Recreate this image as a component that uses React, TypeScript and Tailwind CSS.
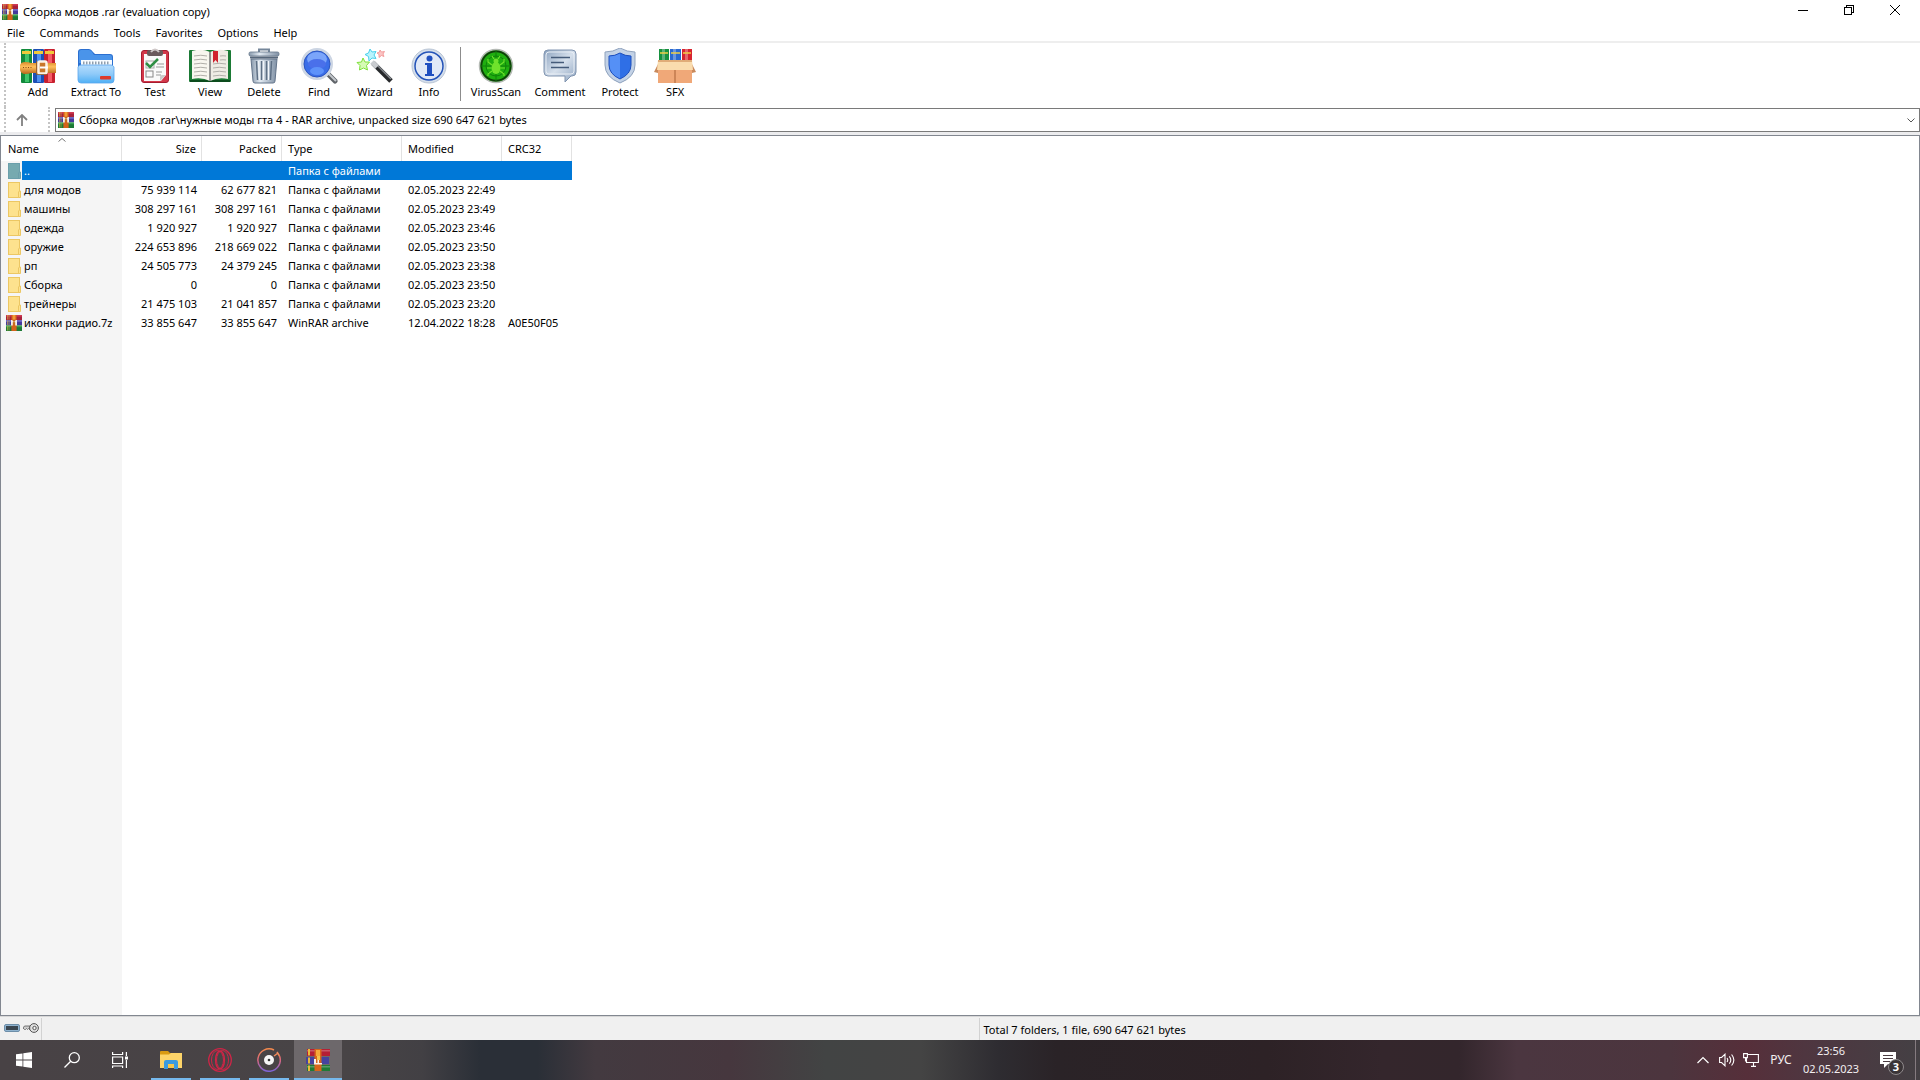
import { ReactNode } from 'react'

type Row = {
  name: string
  size: string
  packed: string
  type: string
  modified: string
  crc: string
  archive?: boolean
}

const folder = 'Папка с файлами'

const rows: Row[] = [
  { name: 'для модов', size: '75 939 114', packed: '62 677 821', type: folder, modified: '02.05.2023 22:49', crc: '' },
  { name: 'машины', size: '308 297 161', packed: '308 297 161', type: folder, modified: '02.05.2023 23:49', crc: '' },
  { name: 'одежда', size: '1 920 927', packed: '1 920 927', type: folder, modified: '02.05.2023 23:46', crc: '' },
  { name: 'оружие', size: '224 653 896', packed: '218 669 022', type: folder, modified: '02.05.2023 23:50', crc: '' },
  { name: 'рп', size: '24 505 773', packed: '24 379 245', type: folder, modified: '02.05.2023 23:38', crc: '' },
  { name: 'Сборка', size: '0', packed: '0', type: folder, modified: '02.05.2023 23:50', crc: '' },
  { name: 'трейнеры', size: '21 475 103', packed: '21 041 857', type: folder, modified: '02.05.2023 23:20', crc: '' },
  { name: 'иконки радио.7z', size: '33 855 647', packed: '33 855 647', type: 'WinRAR archive', modified: '12.04.2022 18:28', crc: 'A0E50F05', archive: true },
]

const menu = ['File', 'Commands', 'Tools', 'Favorites', 'Options', 'Help']

// small stacked-books logo
function RarIcon({ className = 'size-4' }: { className?: string }) {
  return (
    <svg viewBox="0 0 16 16" className={className} aria-hidden="true">
      <rect x="0" y="0" width="16" height="5" fill="#a8203a" />
      <rect x="0" y="0" width="16" height="1.6" fill="#cf3a55" />
      <rect x="0" y="5.3" width="16" height="5" fill="#44389c" />
      <rect x="0" y="5.3" width="16" height="1.6" fill="#6a63c4" />
      <rect x="0" y="10.6" width="16" height="5.4" fill="#1c7a35" />
      <rect x="0" y="10.6" width="16" height="1.6" fill="#3ba352" />
      <path d="M1.5 0v4.6M3 0v4.6M1.5 5.6v4.4M3 5.6v4.4M1.5 11v4.6M3 11v4.6" stroke="#d9b545" strokeWidth=".6" />
      <rect x="5.4" y="0" width="5.2" height="16" fill="#d4621b" />
      <rect x="6.6" y="0" width="2.8" height="4.6" fill="#f29a35" />
      <path d="M5 5v5.6h1.8V7.2h2.4v3.4H11V5H9.4v1H6.6V5z" fill="#f4efe6" />
      <rect x="7.4" y="5.4" width="1.2" height="4.4" fill="#b9761f" />
    </svg>
  )
}

function FolderIcon({ selected }: { selected?: boolean }) {
  const main = selected ? '#76aab0' : '#fde28e'
  const edge = selected ? '#6b9fab' : '#ecc763'
  return (
    <svg viewBox="0 0 16 16" className="size-4 shrink-0" aria-hidden="true">
      <rect x="2.5" y=".5" width="11" height="15" fill={main} stroke={edge} />
      <path d="M12.5 15.500V10l1-1H14.500v6.500z" fill={main} stroke={edge} />
    </svg>
  )
}

function AddIcon() {
  const books = [
    { x: 1, a: '#128a3c', b: '#3fc46a' },
    { x: 13, a: '#1c4fb5', b: '#4b90ee' },
    { x: 24, a: '#c8202f', b: '#f55b66' },
  ]
  return (
    <svg viewBox="0 0 36 36" className="size-9" aria-hidden="true">
      <defs>
        <linearGradient id="strap" x2="0" y2="1">
          <stop offset="0" stopColor="#d98a2a" />
          <stop offset=".4" stopColor="#ffc05c" />
          <stop offset="1" stopColor="#b8651a" />
        </linearGradient>
      </defs>
      {books.map(b => (
        <g key={b.x}>
          <rect x={b.x} y="1" width="11" height="34" rx="1" fill={b.a} />
          <rect x={b.x + 4} y="2" width="4" height="32" fill={b.b} />
          <rect x={b.x + 1} y="3" width="9" height="3" fill="#efc93a" />
        </g>
      ))}
      <path d="M0 17q1-3 5-3 4 0 6 1h25v10H11q-2 1-6 1-4 0-5-4z" fill="url(#strap)" />
      <path d="M3 19.500h9" stroke="#8a4a10" strokeDasharray="1 1.500" />
      <path d="M16 14h10v12H16z" fill="#c9772a" />
      <rect x="18.500" y="13.500" width="8" height="12" rx="1.500" fill="none" stroke="#fbf3e6" strokeWidth="2.500" />
      <path d="M20 19.500h8" stroke="#fff" strokeWidth="2" />
      <path d="M16.500 12.500v14h11" fill="none" stroke="#8b5a2a" strokeWidth=".8" />
    </svg>
  )
}

function ExtractIcon() {
  return (
    <svg viewBox="0 0 38 36" className="h-9 w-[38px]" aria-hidden="true">
      <defs>
        <linearGradient id="fold" x2="0" y2="1">
          <stop offset="0" stopColor="#b4dcfd" />
          <stop offset=".5" stopColor="#8fcaf9" />
          <stop offset="1" stopColor="#4fb0f5" />
        </linearGradient>
      </defs>
      <path d="M1 4q0-3 3-3h8q2 0 4 3l2 2h15q3 0 3 3v20H1z" fill="#2b6fd0" />
      <path d="M2 4q0-2 2-2h8q2 0 3 2l2 3h16q2 0 2 2v6H2z" fill="#4a94ea" />
      <rect x="4" y="12" width="31" height="11" fill="#f7fbff" />
      <path d="M6 15h27" stroke="#8f9dac" strokeWidth="3" strokeDasharray="1.500 1.500" />
      <path d="M1 19q1-2 3-2h30q2 0 3 2v13q0 3-3 3H4q-3 0-3-3z" fill="url(#fold)" stroke="#5ba6ee" strokeWidth=".8" />
      <rect x="23" y="28" width="11" height="3.500" rx="1" fill="#dd3b2c" />
    </svg>
  )
}

function TestIcon() {
  return (
    <svg viewBox="0 0 32 36" className="h-9 w-8" aria-hidden="true">
      <rect x="2.500" y="2.500" width="27" height="32" rx="2.500" fill="#d3384a" stroke="#a51c30" />
      <path d="M5 6h22v21l-5 6H5z" fill="#fafafa" />
      <path d="M27 27l-6 6v-4q0-2 2-2z" fill="#c9c9c9" />
      <rect x="8" y="2" width="16" height="6" rx="2" fill="#6a5a5c" />
      <path d="M12 4q4-5 8 0" stroke="#cfc8c8" strokeWidth="2" fill="none" />
      <rect x="7" y="13" width="8" height="7" fill="none" stroke="#aaa" />
      <path d="M7 15l4 4 8-8" fill="none" stroke="#2f8f45" strokeWidth="2.500" />
      <rect x="7" y="23" width="7" height="6" fill="none" stroke="#888" />
      <path d="M18 16h7M17 19h8M17 24h6M17 27h5" stroke="#999" />
    </svg>
  )
}

function ViewIcon() {
  return (
    <svg viewBox="0 0 44 36" className="h-9 w-11" aria-hidden="true">
      <rect x="1" y="2" width="42" height="32" rx="1" fill="#1b7a35" />
      <rect x="2" y="32" width="40" height="2" fill="#0c4b1c" />
      <path d="M4 3q10-3 18 1v29q-8-4-18-2z" fill="#f8f6ef" />
      <path d="M40 3q-10-3-18 1v29q8-4 18-2z" fill="#efece4" />
      <path d="M22 4v29" stroke="#777" strokeWidth="1.500" />
      <path d="M6 8q7-1.500 13 0M6 12q7-1.500 13 0M6 16q7-1.500 13 0M6 20q7-1.500 13 0M6 24q7-1.500 13 0M6 28q7-1.500 13 0M25 16q6-1.500 13 0M25 20q6-1.500 13 0M25 24q6-1.500 13 0M25 28q6-1.500 13 0M32 8q3-.5 6 0M32 12q3-.5 6 0" fill="none" stroke="#b0aea8" />
      <path d="M25 3h5v12l-2.500-3L25 15z" fill="#d0222e" />
    </svg>
  )
}

function DeleteIcon() {
  return (
    <svg viewBox="0 0 32 36" className="h-9 w-8" aria-hidden="true">
      <defs>
        <linearGradient id="bin">
          <stop offset="0" stopColor="#8798ab" />
          <stop offset=".35" stopColor="#e2eaf2" />
          <stop offset="1" stopColor="#7f90a4" />
        </linearGradient>
      </defs>
      <path d="M11 4V1.500h10V4" fill="none" stroke="#75869a" strokeWidth="2" />
      <path d="M3 11h26l-2 22q0 2-2 2H7q-2 0-2-2z" fill="url(#bin)" stroke="#63748a" />
      <rect x="1" y="4" width="30" height="4" rx="1.500" fill="url(#bin)" stroke="#66778b" strokeWidth=".8" />
      <path d="M2 9.500h28" stroke="#56677b" strokeWidth="2" />
      <path d="M8.500 13l1 19M13.500 13v19M18.500 13v19M23.500 13l-1 19" stroke="#5d6f84" strokeWidth="1.500" />
      <path d="M10.500 13l1 19M15.500 13v19M20.500 13v19" stroke="#f2f6fa" />
    </svg>
  )
}

function FindIcon() {
  return (
    <svg viewBox="0 0 38 36" className="h-9 w-[38px]" aria-hidden="true">
      <path d="M26 24l9 9" stroke="#5f6368" strokeWidth="5" strokeLinecap="round" />
      <path d="M27 24l9 9" stroke="#c3c7cc" strokeWidth="2" />
      <circle cx="17" cy="16" r="14.500" fill="#3b6ee8" stroke="#ccd5e3" strokeWidth="3" />
      <circle cx="17" cy="16" r="13" fill="none" stroke="#2a55c0" />
      <ellipse cx="17" cy="11" rx="10" ry="7" fill="#7ba5fa" />
      <ellipse cx="17" cy="16" rx="9" ry="5" fill="#4a70ea" />
      <ellipse cx="17" cy="23" rx="7" ry="4" fill="#5d92fa" />
    </svg>
  )
}

function WizardIcon() {
  return (
    <svg viewBox="0 0 38 36" className="h-9 w-[38px]" aria-hidden="true">
      <path d="M17 15l18 18" stroke="#26282b" strokeWidth="5" />
      <path d="M18 14l17 17" stroke="#85898f" strokeWidth="1.500" />
      <path d="M16 14l5 5" stroke="#c9ccd0" strokeWidth="5" />
      <path d="M14 1l2 3 4-.5-2 3.500 2 3.500-4-.5-3 3-.5-4.500-3.500-2 3.500-1.500z" fill="#b9f3fc" stroke="#4bd0ec" />
      <path d="M7 10l2 4 4.500 0-3 3.500 1 4.500-4-2-4 2 .5-4.500-3-3 4.500-.5z" fill="#d5fbb5" stroke="#7ee03b" />
      <path d="M24 2l1.500 2 3-.5-1.500 2.500 1 2.500-2.500-1-2.500 2v-3l-2-1.500 2.500-1z" fill="#fbc4c4" stroke="#f08e8e" strokeWidth=".8" />
    </svg>
  )
}

function InfoIcon() {
  return (
    <svg viewBox="0 0 36 36" className="size-9" aria-hidden="true">
      <circle cx="18" cy="18" r="17" fill="#d5dfec" stroke="#b8c4d4" />
      <circle cx="18" cy="18" r="14" fill="#e1e9f7" stroke="#2453b8" strokeWidth="1.500" />
      <circle cx="18.500" cy="10.500" r="3" fill="#1f4fc0" />
      <path d="M14 15h7v11h2v2h-9v-2h2v-9h-2z" fill="#1f4fc0" />
    </svg>
  )
}

function VirusIcon() {
  return (
    <svg viewBox="0 0 36 36" className="size-9" aria-hidden="true">
      <circle cx="18" cy="18" r="16.500" fill="#1b6b12" stroke="#b5bab5" strokeWidth="1.500" />
      <circle cx="18" cy="18" r="14.500" fill="#1fae10" stroke="#0e3d0a" strokeWidth="1.500" />
      <circle cx="18" cy="18" r="10" fill="none" stroke="#0f8209" />
      <path d="M18 3v30M3 18h30" stroke="#0f8209" />
      <ellipse cx="18" cy="20" rx="4.500" ry="6" fill="#6fe22c" />
      <circle cx="18" cy="13" r="2.500" fill="#6fe22c" />
      <path d="M14 17l-4-3V11M22 17l4-3V11M13.500 20H9M22.500 20H27M14 23l-4 3v2M22 23l4 3v2M16 11l-2-3M20 11l2-3" fill="none" stroke="#6fe22c" strokeWidth="1.200" />
    </svg>
  )
}

function CommentIcon() {
  return (
    <svg viewBox="0 0 34 36" className="h-9 w-[34px]" aria-hidden="true">
      <defs>
        <linearGradient id="bubble" x2="1" y2="1">
          <stop offset="0" stopColor="#8ba2bf" />
          <stop offset=".5" stopColor="#d6e0ec" />
          <stop offset="1" stopColor="#8fa5c1" />
        </linearGradient>
      </defs>
      <path d="M5 2h24q4 0 4 4v18q0 4-4 4h-1l-6 6v-6H5q-4 0-4-4V6q0-4 4-4z" fill="url(#bubble)" stroke="#8195b0" />
      <path d="M6 4h22q3 0 3 3v16q0 3-3 3H6q-3 0-3-3V7q0-3 3-3z" fill="none" stroke="#e8eef5" />
      <path d="M8 9.500h19M8 14.500h13M8 19.500h18" stroke="#455b7a" strokeWidth="1.500" />
    </svg>
  )
}

function ProtectIcon() {
  return (
    <svg viewBox="0 0 32 36" className="h-9 w-8" aria-hidden="true">
      <path d="M16 0q7 4 15 4v13q0 12-15 18Q1 29 1 17V4q8 0 15-4z" fill="#c3d2e6" stroke="#8fa2bd" />
      <path d="M16 5q5 3 11 3v9q0 9-11 14Q5 26 5 17V8q6 0 11-3z" fill="#2f6fe6" />
      <path d="M16 5v26Q5 26 5 17V8q6 0 11-3z" fill="#5590f6" />
      <path d="M16 5q5 3 11 3v9q0 9-11 14Q5 26 5 17V8q6 0 11-3z" fill="none" stroke="#1d4ebc" />
    </svg>
  )
}

function SfxIcon() {
  return (
    <svg viewBox="0 0 44 36" className="h-9 w-11" aria-hidden="true">
      <path d="M6 1h10v14H6z" fill="#17913f" />
      <path d="M17 1h11v14H17z" fill="#2a6ad2" />
      <path d="M29 1h10v14H29z" fill="#d8242f" />
      <path d="M9 1h3v14H9zM20 1h3v14h-3zM32 1h3v14h-3z" fill="#fff" opacity=".3" />
      <path d="M7 5h8M18 5h9M30 5h8" stroke="#f0cf45" strokeWidth="1.500" />
      <path d="M6 14L1 24l4 1V18zM38 14l5 10-4 1z" fill="#c98a5c" />
      <path d="M5 18h34v17H5z" fill="#f0a878" />
      <path d="M5 12h34l1 10H4z" fill="#fadcae" />
      <path d="M5 12h34v2H5z" fill="#e0ac78" />
      <path d="M22 22v13" stroke="#c27a4c" strokeWidth="1.500" />
    </svg>
  )
}

const tools: { label: string; width: string; icon: ReactNode }[] = [
  { label: 'Add', width: 'w-[54px]', icon: <AddIcon /> },
  { label: 'Extract To', width: 'w-[62px]', icon: <ExtractIcon /> },
  { label: 'Test', width: 'w-14', icon: <TestIcon /> },
  { label: 'View', width: 'w-[54px]', icon: <ViewIcon /> },
  { label: 'Delete', width: 'w-[54px]', icon: <DeleteIcon /> },
  { label: 'Find', width: 'w-14', icon: <FindIcon /> },
  { label: 'Wizard', width: 'w-14', icon: <WizardIcon /> },
  { label: 'Info', width: 'w-[52px]', icon: <InfoIcon /> },
]

const extraTools: typeof tools = [
  { label: 'VirusScan', width: 'w-[62px]', icon: <VirusIcon /> },
  { label: 'Comment', width: 'w-[66px]', icon: <CommentIcon /> },
  { label: 'Protect', width: 'w-[54px]', icon: <ProtectIcon /> },
  { label: 'SFX', width: 'w-14', icon: <SfxIcon /> },
]

function ToolButton({ tool }: { tool: (typeof tools)[number] }) {
  return (
    <button type="button" className={`flex flex-col items-center justify-start whitespace-nowrap ${tool.width}`}>
      {tool.icon}
      <span className="leading-4">{tool.label}</span>
    </button>
  )
}

function TitleBar() {
  return (
    <header className="flex h-6 items-start pr-0.5">
      <h1 className="flex grow items-center gap-[5px] pt-[3px] pl-0.5 leading-4">
        <RarIcon />
        <span className="pt-px">Сборка модов .rar (evaluation copy)</span>
      </h1>
      <button type="button" aria-label="Minimize" className="flex h-5 w-[46px] items-center justify-center">
        <svg viewBox="0 0 10 10" className="size-2.5" shapeRendering="crispEdges"><path d="M0 5.500h10" stroke="#000" /></svg>
      </button>
      <button type="button" aria-label="Restore" className="flex h-5 w-[46px] items-center justify-center">
        <svg viewBox="0 0 10 10" className="size-2.5" fill="none" stroke="#000" shapeRendering="crispEdges">
          <path d="M.5 2.500h7v7h-7zM2.500 2.500v-2h7v7h-2" />
        </svg>
      </button>
      <button type="button" aria-label="Close" className="flex h-5 w-[46px] items-center justify-center">
        <svg viewBox="0 0 10 10" className="size-2.5"><path d="M0 0l10 10M10 0L0 10" stroke="#000" /></svg>
      </button>
    </header>
  )
}

function FileTable() {
  const edge = 'border-r border-[#e2e2e2] font-normal'
  return (
    <table className="w-[571px] table-fixed border-separate border-spacing-0 whitespace-nowrap">
      <colgroup>
        <col className="w-[121px]" />
        <col className="w-20" />
        <col className="w-20" />
        <col className="w-[120px]" />
        <col className="w-[100px]" />
        <col className="w-[70px]" />
      </colgroup>
      <thead>
        <tr className="h-[25px] bg-white text-left">
          <th className={`relative pt-0.5 pl-[7px] ${edge}`}>
            Name
            <svg viewBox="0 0 8 4" className="absolute top-0.5 left-[57px] h-1 w-2" fill="none" stroke="#777"><path d="M.5 3.500L4 .5l3.500 3" /></svg>
          </th>
          <th className={`pt-0.5 pr-[5px] text-right ${edge}`}>Size</th>
          <th className={`pt-0.5 pr-[5px] text-right ${edge}`}>Packed</th>
          <th className={`pt-0.5 pl-1.5 ${edge}`}>Type</th>
          <th className={`pt-0.5 pl-1.5 ${edge}`}>Modified</th>
          <th className={`pt-0.5 pl-1.5 ${edge}`}>CRC32</th>
        </tr>
      </thead>
      <tbody className="leading-[19px]">
        <tr className="h-[19px] bg-[linear-gradient(to_right,#f5f5f5_21px,#0078d7_21px)] text-white">
          <td className="p-0 pl-[5px]"><div className="flex items-center gap-0.5"><FolderIcon selected />..</div></td>
          <td />
          <td />
          <td className="p-0 pl-1.5">{folder}</td>
          <td />
          <td />
        </tr>
        {rows.map(row => (
          <tr key={row.name} className="h-[19px]">
            <td className="p-0 pl-[5px]">
              <div className="flex items-center gap-0.5">
                {row.archive ? <RarIcon className="size-4 shrink-0" /> : <FolderIcon />}
                {row.name}
              </div>
            </td>
            <td className="p-0 pr-[5px] text-right">{row.size}</td>
            <td className="p-0 pr-[5px] text-right">{row.packed}</td>
            <td className="p-0 pl-1.5">{row.type}</td>
            <td className="p-0 pl-1.5">{row.modified}</td>
            <td className="p-0 pl-1.5">{row.crc}</td>
          </tr>
        ))}
      </tbody>
    </table>
  )
}

function TaskApp({ label, active, children }: { label: string; active?: boolean; children: ReactNode }) {
  return (
    <button type="button" aria-label={label} className={`flex h-10 w-12 flex-col items-center ${active ? 'bg-[#6d686b]' : ''}`}>
      <span className="flex grow items-center pt-0.5">{children}</span>
      <span className={`h-0.5 bg-[#76b9ed] ${active ? 'w-full' : 'w-10'}`} />
    </button>
  )
}

function Taskbar() {
  return (
    <footer className="flex h-10 items-center bg-[linear-gradient(to_right,#484245_0%,#484446_18%,#424044_22%,#2a2f37_25%,#2a2f37_28%,#433a40_31%,#46373e_38%,#424444_43%,#444444_48%,#2e2c31_52%,#2a2327_55%,#2d2226_66%,#34262c_72%,#33262c_76%,#4b3640_79%,#4c353e_87%,#562f3a_91%,#4f3640_94%,#444044_100%)] text-[#f2eef0]">
      <button type="button" aria-label="Start" className="flex h-10 w-12 items-center justify-center">
        <svg viewBox="0 0 16 16" className="size-4" fill="#fff"><path d="M0 2.300L6.500 1.400V7.600H0zM7.300 1.300L16 0v7.600H7.300zM0 8.400h6.500v6.200L0 13.700zM7.300 8.400H16V16l-8.700-1.300z" /></svg>
      </button>
      <button type="button" aria-label="Search" className="flex h-10 w-12 items-center justify-center">
        <svg viewBox="0 0 16 16" className="size-4" fill="none" stroke="#fff" strokeWidth="1.300"><circle cx="10.300" cy="5.700" r="5" /><path d="M6.700 9.300L.5 15.500" /></svg>
      </button>
      <button type="button" aria-label="Task View" className="mr-[3px] flex h-10 w-12 items-center justify-center">
        <svg viewBox="0 0 16 16" className="size-4" fill="none" stroke="#fff" strokeWidth="1.200">
          <path d="M.6 0v2.500h10V0M.6 5h10v6.500H.6zM.6 16v-2h10v2M14.400 0v4M14.400 8v8" />
          <path d="M13 4.500h3v3h-3z" fill="#fff" stroke="none" />
        </svg>
      </button>
      <div className="flex gap-px">
        <TaskApp label="File Explorer">
          <svg viewBox="0 0 22 20" className="h-5 w-[22px]">
            <path d="M0 2q0-1 1-1h7l2 2h12v6H0z" fill="#d99a12" />
            <path d="M0 4.500h9l2-1.500h11v15H0z" fill="#fdd469" />
            <path d="M4 19v-7q0-2 2-2h10q2 0 2 2v7h-4v-5H8v5z" fill="#3b9be0" />
            <path d="M8 14h6v4H8z" fill="#f7c64b" />
          </svg>
        </TaskApp>
        <TaskApp label="Opera">
          <svg viewBox="0 0 24 24" className="size-6" fill="none" stroke="#cf2547" strokeWidth="1.300">
            <circle cx="12" cy="12" r="11.300" />
            <ellipse cx="9.500" cy="12" rx="6" ry="9.500" strokeWidth="1" />
            <ellipse cx="14.500" cy="12" rx="6" ry="9.500" strokeWidth="1" />
            <ellipse cx="12" cy="12" rx="4.500" ry="9" />
          </svg>
        </TaskApp>
        <TaskApp label="Music">
          <svg viewBox="0 0 24 24" className="size-6" fill="none">
            <defs>
              <linearGradient id="ring" x2="0" y2="1">
                <stop offset="0" stopColor="#f58a4c" />
                <stop offset=".5" stopColor="#d9677e" />
                <stop offset="1" stopColor="#7c63d6" />
              </linearGradient>
            </defs>
            <path d="M17 2A11.200 11.200 0 1 0 22.500 8" stroke="url(#ring)" strokeWidth="1.500" />
            <path d="M17 8l4-3M20 4l2.500 4" stroke="#f08a5c" strokeWidth="1.500" />
            <circle cx="12" cy="12" r="5" fill="#f5f5f5" />
            <circle cx="12" cy="12" r="1.300" fill="#333" />
          </svg>
        </TaskApp>
        <TaskApp label="WinRAR" active>
          <svg viewBox="0 0 24 24" className="size-6">
            <path d="M1 1h23v7H1z" fill="#b51f35" />
            <path d="M0 9h23v7H0z" fill="#45429f" />
            <path d="M1 17h23v6H1z" fill="#1f7a36" />
            <path d="M1 2h23v1.500H1zM1 18h23v1.500H1z" fill="#fff" opacity=".25" />
            <path d="M3 1v6.500M3 9.500v6M3 17.500V23" stroke="#e9b93a" strokeWidth="2" />
            <path d="M8.500 1h7v22h-7z" fill="#d8651c" />
            <path d="M10 2h4v6h-4z" fill="#f6a93a" />
            <path d="M8 11v5.500h8V15h-3v-4h-1.500v4H10v-4z" fill="#f7f1e8" />
            <path d="M11 8h3v4h-3z" fill="#f3c24f" />
          </svg>
        </TaskApp>
      </div>
      <div className="ml-auto flex h-full items-center">
        <button type="button" aria-label="Show hidden icons" className="flex w-6 justify-center">
          <svg viewBox="0 0 12 8" className="h-2 w-3" fill="none" stroke="#fff" strokeWidth="1.200"><path d="M.5 7L6 1.500 11.500 7" /></svg>
        </button>
        <button type="button" aria-label="Volume" className="flex w-6 justify-center">
          <svg viewBox="0 0 16 14" className="h-3.5 w-4" fill="none" stroke="#fff" strokeWidth="1.100">
            <path d="M.6 4.500h2L6 1.200v11.600L2.600 9.500h-2zM8 5q1.500 2 0 4M10.300 3.300q3 3.700 0 7.400M12.600 1.500q4.500 5.500 0 11" />
          </svg>
        </button>
        <button type="button" aria-label="Network" className="flex w-6 justify-center">
          <svg viewBox="0 0 16 14" className="h-3.5 w-4" fill="none" stroke="#fff" strokeWidth="1.100">
            <path d="M5 1.500h10.400v8H3.500V5M8 13.400h5M10.500 9.500v4M.6.6h3.800v4H.6zM2.500 4.600v4" />
          </svg>
        </button>
        <button type="button" className="w-9 text-center text-xs">РУС</button>
        <button type="button" className="mr-1 flex w-16 flex-col items-center leading-[18px]">
          <span>23:56</span>
          <span>02.05.2023</span>
        </button>
        <button type="button" aria-label="Notifications" className="relative flex h-10 w-12 items-center justify-start pl-[13px]">
          <svg viewBox="0 0 16 16" className="size-4"><path d="M0 0h16v12H8l-4 4v-4H0z" fill="#fff" /><path d="M3 3.500h10M3 6.500h10M3 9.500h7" stroke="#4b3c42" /></svg>
          <span className="absolute top-[19px] left-[21px] flex size-4 items-center justify-center rounded-full border border-[#8f8a8c] bg-[#3a3437] font-bold text-white">3</span>
        </button>
        <span className="h-full w-[5px] border-l border-[#857b80]" />
      </div>
    </footer>
  )
}

export default function App() {
  return (
    <div className="flex min-h-screen flex-col bg-white font-['Noto_Sans','Open_Sans',sans-serif] text-[11px] text-black">
      <TitleBar />
      <nav className="flex h-[19px] items-start gap-[15px] border-b-2 border-[#eeeeee] pt-px pl-[7px] leading-4">
        {menu.map(item => (
          <button key={item} type="button">{item}</button>
        ))}
      </nav>
      <div className="ml-1 flex h-16 border-l-2 border-dotted border-[#c4c4c4] pt-[5px] pl-[5px]">
        {tools.map(tool => <ToolButton key={tool.label} tool={tool} />)}
        <span className="mr-1 ml-[5px] -mt-px h-[54px] w-px bg-[#8c8c8c]" />
        {extraTools.map(tool => <ToolButton key={tool.label} tool={tool} />)}
      </div>
      <div className="ml-1 flex h-[25px] border-l-2 border-dotted border-[#c4c4c4]">
        <button type="button" aria-label="Up one level" className="flex w-8 items-center justify-center">
          <svg viewBox="0 0 12 12" className="size-3" fill="none" stroke="#808080" strokeWidth="1.800"><path d="M6 12V1.500M1 6l5-5 5 5" /></svg>
        </button>
        <div className="ml-2.5 w-[7px] border-l-2 border-dotted border-[#c4c4c4]" />
        <button type="button" className="mt-px flex grow items-center gap-[5px] border border-[#7a7a7a] pr-1 pl-0.5 text-left">
          <RarIcon />
          <span className="grow pt-px">Сборка модов .rar\нужные моды гта 4 - RAR archive, unpacked size 690 647 621 bytes</span>
          <svg viewBox="0 0 8 5" className="h-[5px] w-2" fill="none" stroke="#555"><path d="M.5 .5L4 4 7.500 .5" /></svg>
        </button>
      </div>
      <div className="h-[3px] bg-[#ececee]" />
      <main className="grow border border-[#828790] bg-[linear-gradient(to_right,#f5f5f5_121px,white_121px)]">
        <div className="bg-[linear-gradient(white,white)] bg-[length:100%_25px] bg-no-repeat">
          <FileTable />
        </div>
      </main>
      <div className="flex h-6 items-stretch border-t border-[#d7d7d7] bg-[#f0f0f0] pt-px">
        <div className="flex w-[42px] gap-[3px] border-r border-[#d2d2d2] pt-0.5 pl-1">
          <svg viewBox="0 0 16 16" className="size-4">
            <rect x=".5" y="4.500" width="15" height="7" rx="1.500" fill="#8fb3cf" stroke="#6d8ea8" />
            <rect x="2" y="6" width="12" height="4" fill="#3a4650" />
          </svg>
          <svg viewBox="0 0 16 16" className="size-4">
            <path d="M7 6H1.500L0 8l1.500 1.500h1l1-1 1 1 1-1 1.500 1.500z" fill="#ccc" stroke="#666" strokeWidth=".9" />
            <circle cx="11" cy="8" r="4.400" fill="#e0e0e0" stroke="#555" />
            <circle cx="11.500" cy="8" r="1.700" fill="#f8f8f8" stroke="#555" />
          </svg>
        </div>
        <div className="grow basis-0 border-r border-[#d2d2d2]" />
        <div className="grow basis-0 pt-px pl-1 leading-[22px]">Total 7 folders, 1 file, 690 647 621 bytes</div>
      </div>
      <Taskbar />
    </div>
  )
}
